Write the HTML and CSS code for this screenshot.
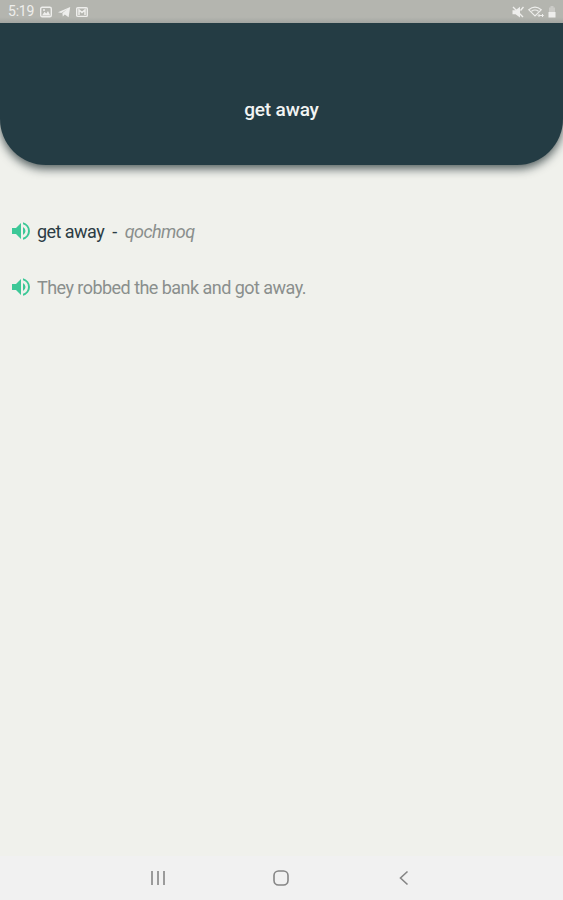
FILE: index.html
```html
<!DOCTYPE html>
<html lang="en">
<head>
    <meta charset="UTF-8">
    <meta name="viewport" content="width=device-width, initial-scale=1.0">
    <title>get away</title>
    <link rel="stylesheet" href="styles.css">
</head>
<body>

    <!-- Status bar -->
    <div class="status-bar">
        <div class="status-left">
            <span class="time">5:19</span>
            <svg width="12" height="12" viewBox="0 0 12 12">
                <rect x="0.7" y="1.2" width="10.6" height="9.6" rx="1.5" fill="none" stroke="currentColor" stroke-width="1.4"/>
                <path d="M2 9.5l2.5-3.8 1.8 1.8 1.7-2.4 2.3 4.4z" fill="currentColor"/>
                <circle cx="4" cy="4" r="1" fill="currentColor"/>
            </svg>
            <svg class="telegram" width="13" height="12" viewBox="0 0 13 12">
                <path d="M0 6.2L12.2 1l-1.600 10.200-3.800-2.700-2 2-.4-3.400 5.200-4-6.300 3.800z" fill="currentColor"/>
            </svg>
            <svg width="12" height="12" viewBox="0 0 12 12">
                <rect x="0.7" y="1.8" width="10.6" height="8.6" rx="1" fill="none" stroke="currentColor" stroke-width="1.4"/>
                <path d="M3 9V4l3 2.6L9 4v5" fill="none" stroke="currentColor" stroke-width="1.5"/>
            </svg>
        </div>
        <div class="status-right">
            <svg width="12" height="12" viewBox="0 0 12 12">
                <path d="M0.5 4.2h3L8 0.8v10.7L3.5 8.2h-3z" fill="currentColor"/>
                <path d="M1 1l10 10M8.5 4.5L11.5 1" fill="none" stroke="currentColor" stroke-width="1.4"/>
            </svg>
            <svg width="16" height="12" viewBox="0 0 16 12">
                <path d="M0.8 3.8Q7 -1.4 13.2 3.8L7 10zM3.5 5.2Q7 2.8 10.5 5.2" fill="none" stroke="currentColor" stroke-width="1.2"/>
                <path d="M10.5 9.5h4.5M11.5 8l-1.5 1.5 1.5 1.5M14 8l1.5 1.5L14 11" fill="none" stroke="currentColor"/>
            </svg>
            <svg width="8" height="12" viewBox="0 0 8 12">
                <path d="M2.5 0h3v1.5H7V6H1V1.5h1.5z" fill="currentColor" opacity="0.4"/>
                <path d="M0.5 6h7v5.5h-7z" fill="currentColor"/>
            </svg>
        </div>
    </div>

    <!-- Header with the phrase -->
    <header class="header">
        <h1>get away</h1>
    </header>

    <!-- Translation and example -->
    <main class="content">
        <div class="row">
            <svg class="speaker" viewBox="0 0 24 24">
                <path d="M3 9v6h4l5 5V4L7 9H3zm13.5 3A4.5 4.5 0 0 0 14 7.97v8.05A4.5 4.5 0 0 0 16.5 12zM14 3.23v2.06a7 7 0 0 1 0 13.42v2.06a9 9 0 0 0 0-17.54z"/>
            </svg>
            <span class="word">get away</span>
            <span class="dash">-</span>
            <span class="translation">qochmoq</span>
        </div>
        <div class="row">
            <svg class="speaker" viewBox="0 0 24 24">
                <path d="M3 9v6h4l5 5V4L7 9H3zm13.5 3A4.5 4.5 0 0 0 14 7.97v8.05A4.5 4.5 0 0 0 16.5 12zM14 3.23v2.06a7 7 0 0 1 0 13.42v2.06a9 9 0 0 0 0-17.54z"/>
            </svg>
            <span class="example">They robbed the bank and got away.</span>
        </div>
    </main>

    <!-- Navigation bar -->
    <nav class="nav-bar">
        <svg width="18" height="18" viewBox="0 0 18 18">
            <path d="M3 2v14M9 2v14M15 2v14"/>
        </svg>
        <svg width="18" height="18" viewBox="0 0 18 18">
            <rect x="2" y="2" width="14" height="14" rx="4.5"/>
        </svg>
        <svg width="18" height="18" viewBox="0 0 18 18">
            <path d="M12.5 2.5L5.500 9l7 6.500"/>
        </svg>
    </nav>

</body>
</html>
```
FILE: styles.css
```css
body {
    margin: 0;
    height: 100vh;
    display: flex;
    flex-direction: column;
    overflow: hidden;
    background-color: #f0f1ec;
    font-family: Roboto, sans-serif;
}

/* Status bar */
.status-bar {
    height: 23px;
    flex-shrink: 0;
    display: flex;
    justify-content: space-between;
    align-items: center;
    padding: 0 7px 0 8px;
    box-sizing: border-box;
    background: linear-gradient(#b4b5af 75%, #a2a5a1);
    color: #eeeeec;
}

.status-left,
.status-right {
    display: flex;
    align-items: center;
    gap: 6px;
}

.status-right {
    gap: 4px;
}

.time {
    font-size: 14px;
    line-height: 23px;
    letter-spacing: -0.2px;
}

.telegram {
    margin-right: -1px;
}

/* Header */
.header {
    height: 142px;
    flex-shrink: 0;
    display: flex;
    justify-content: center;
    background-color: #243c44;
    border-radius: 0 0 46px 46px;
    box-shadow: 0 4px 10px rgba(20, 35, 38, 0.7);
    clip-path: inset(0 0 -30px 0);
}

h1 {
    margin: 76px 0 0;
    font-size: 19px;
    line-height: 22px;
    font-weight: 500;
    letter-spacing: -0.15px;
    color: #f2f4f3;
}

/* Content */
.content {
    flex: 1;
    padding: 54px 11px 0;
}

.row {
    display: flex;
    align-items: center;
    height: 24px;
    margin-bottom: 32px;
    font-size: 18px;
    letter-spacing: -0.54px;
    white-space: nowrap;
}

.speaker {
    width: 24px;
    height: 24px;
    margin-left: -2px;
    margin-right: 4px;
    fill: #3cc897;
}

.word {
    color: #2c3c44;
}

.dash {
    margin: 0 8px;
    color: #2c3c44;
}

.translation {
    font-style: italic;
    color: #8a8f8d;
}

.example {
    color: #8a8f8d;
}

/* Navigation bar */
.nav-bar {
    height: 44px;
    display: flex;
    justify-content: center;
    align-items: center;
    gap: 105px;
    padding-right: 2px;
    background-color: #f1f1f1;
}

.nav-bar svg {
    fill: none;
    stroke: #858585;
    stroke-width: 1.6;
}
```
